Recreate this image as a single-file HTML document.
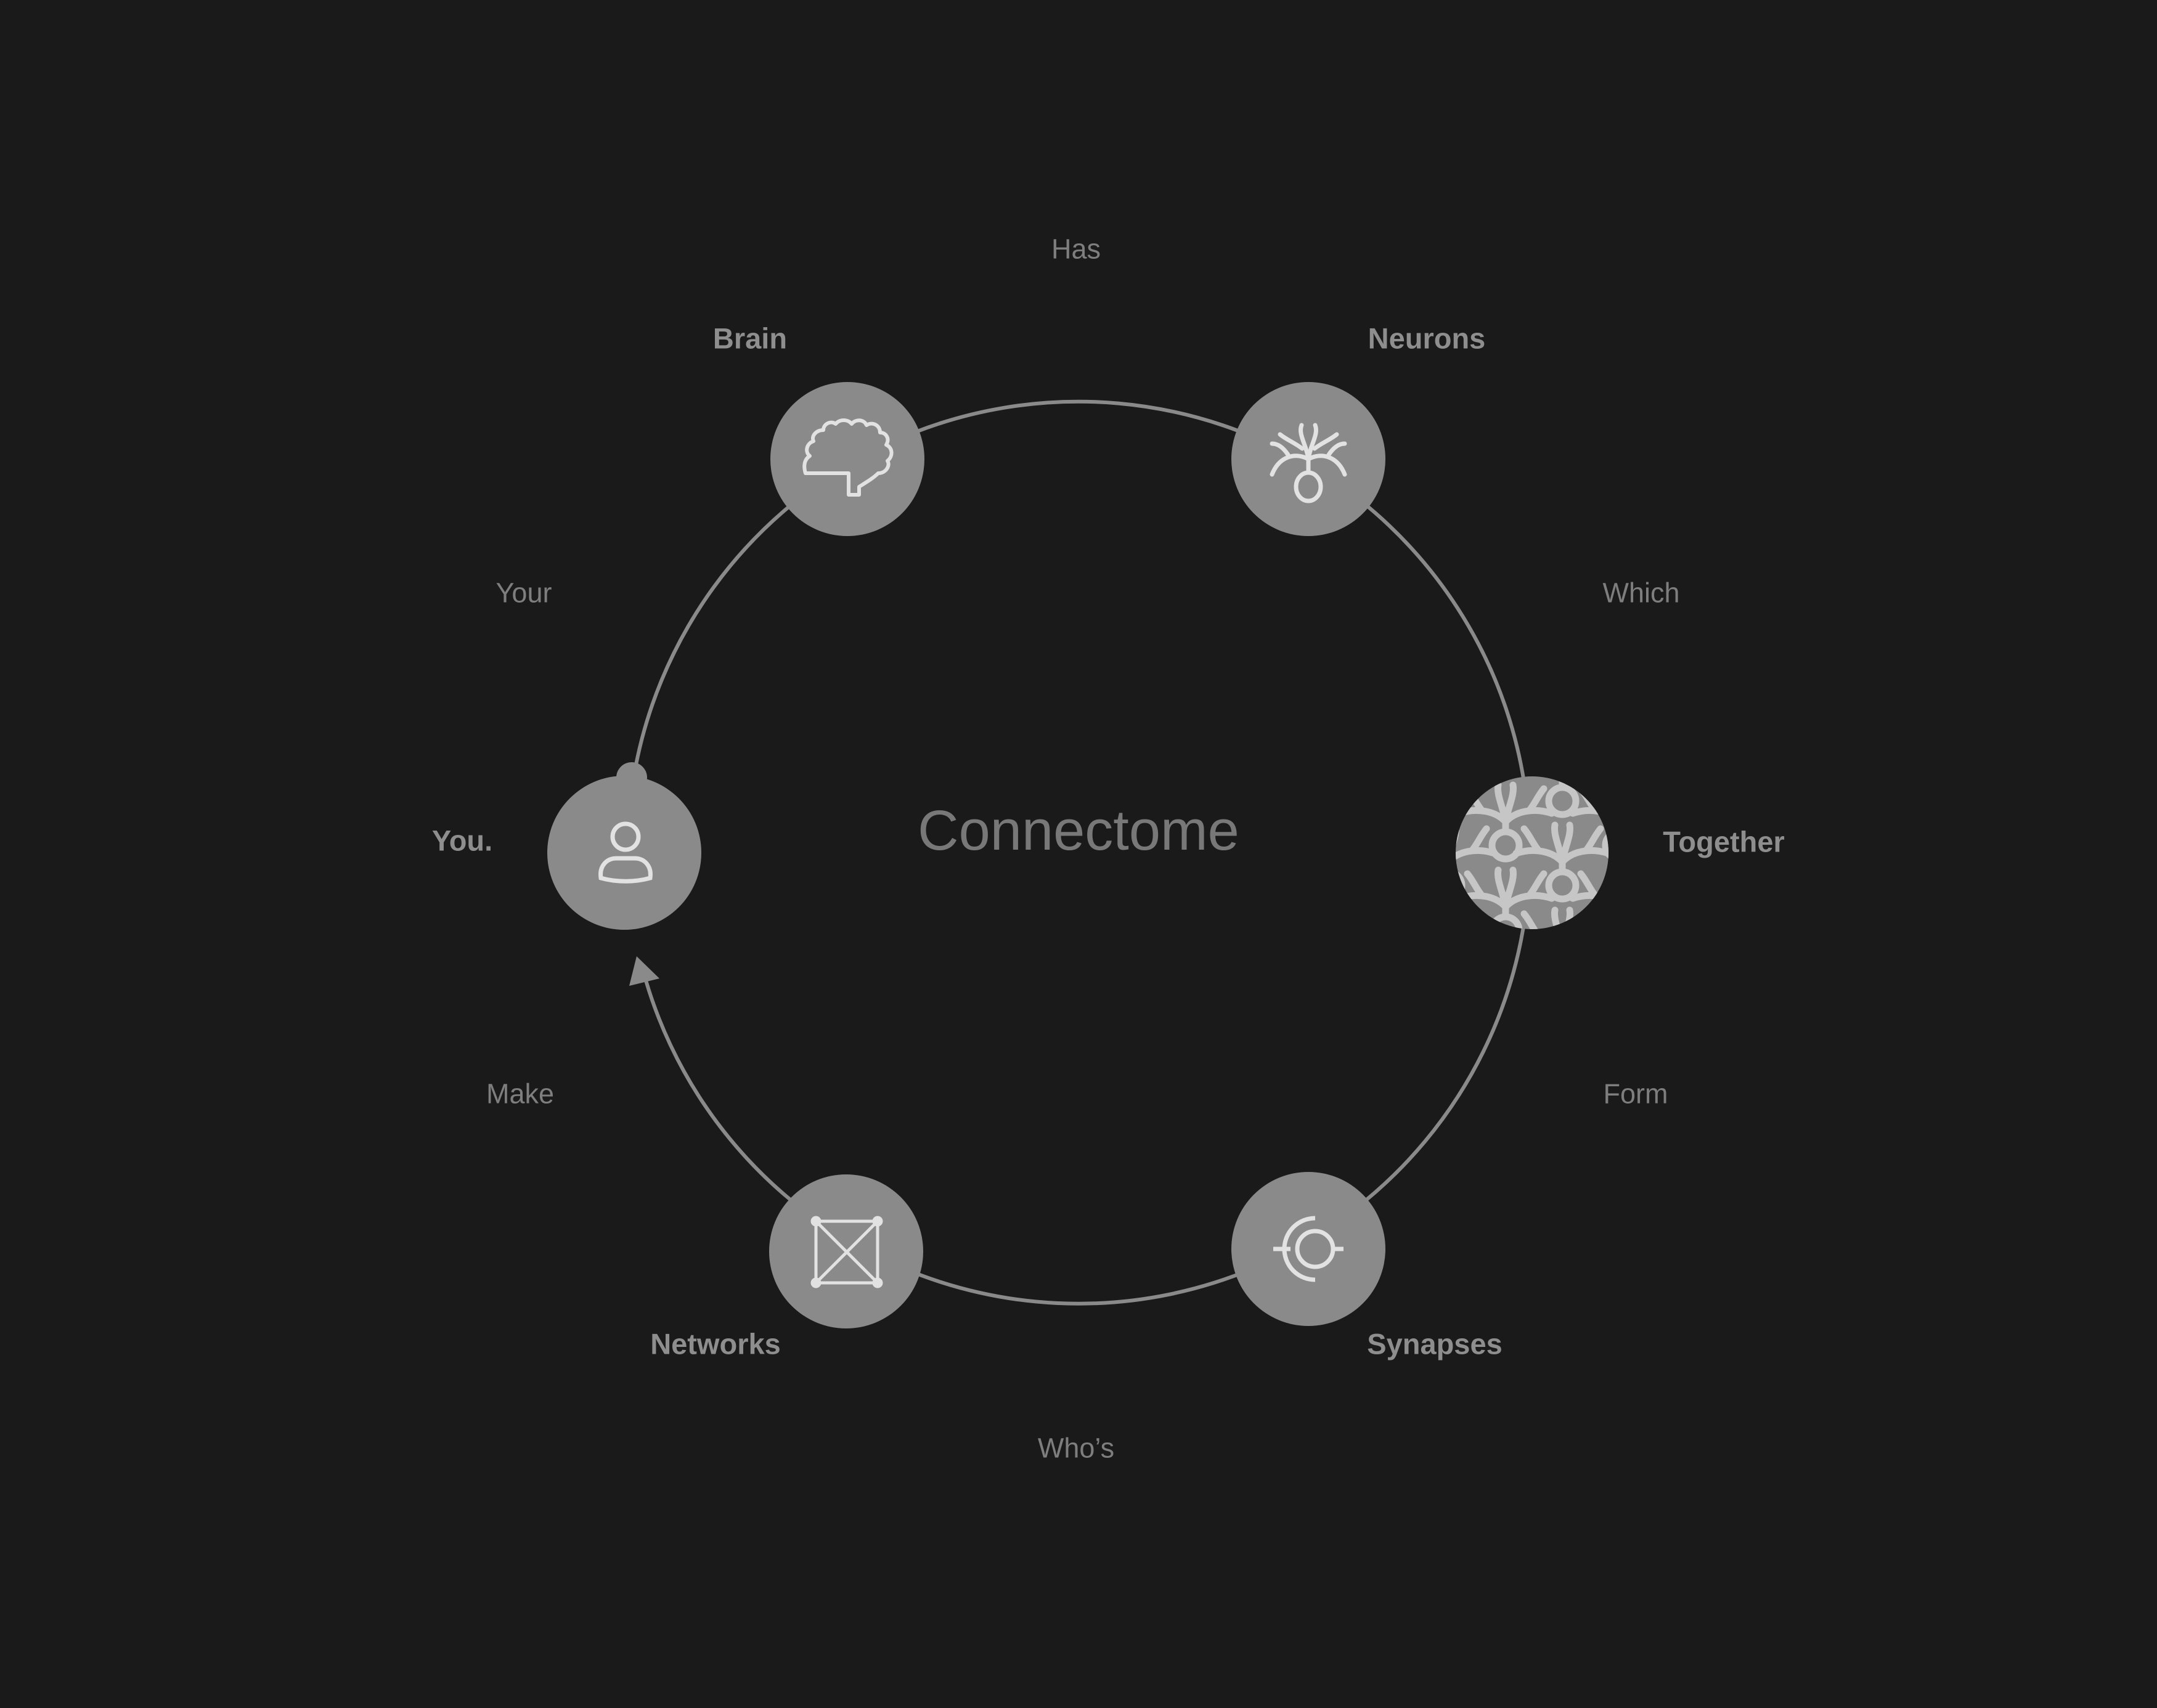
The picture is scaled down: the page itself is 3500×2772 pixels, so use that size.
<!DOCTYPE html>
<html><head><meta charset="utf-8"><style>
html,body{margin:0;padding:0;background:#1a1a1a;}
svg{display:block;}
text{font-family:"Liberation Sans",sans-serif;text-anchor:middle;dominant-baseline:central;}
.b{font-weight:bold;font-size:47px;fill:#8e8e8e;}
.l{font-size:45px;fill:#7e7e7e;}
</style></head><body>
<svg width="3500" height="2772" viewBox="0 0 3500 2772" xmlns="http://www.w3.org/2000/svg">
<defs>
<g id="nrn" fill="none" stroke="#c6c6c6" stroke-width="11" stroke-linecap="round">
<circle cx="0" cy="0" r="22"/>
<path d="M0,-22 V-38"/>
<path d="M0,-38 C-15,-55 -45,-62 -75,-52"/>
<path d="M0,-38 C-4,-62 -15,-82 -12,-98"/>
<path d="M-38,-56 C-48,-68 -52,-80 -62,-92"/>
<path d="M0,-38 C15,-55 45,-62 75,-52"/>
<path d="M0,-38 C4,-62 15,-82 12,-98"/>
<path d="M38,-56 C48,-68 52,-80 62,-92"/>
</g>
<clipPath id="tc"><circle cx="2486" cy="1384" r="124"/></clipPath>
</defs>
<rect width="3500" height="2772" fill="#1a1a1a"/>
<path d="M1048.5,1593 A732 732 0 1 0 1029,1257" fill="none" stroke="#8a8a8a" stroke-width="6"/>
<polygon points="1033,1552 1021,1600 1070,1588" fill="#8a8a8a"/>
<circle cx="1025" cy="1262" r="25" fill="#8a8a8a"/>
<g fill="#8a8a8a">
<circle cx="1375" cy="745" r="125"/>
<circle cx="2123" cy="745" r="125"/>
<circle cx="2486" cy="1384" r="124"/>
<circle cx="2123" cy="2027" r="125"/>
<circle cx="1373" cy="2031" r="125"/>
<circle cx="1013" cy="1384" r="125"/>
</g>
<!-- Brain -->
<path d="M1377,768 V803 H1394 V790 C1410,780 1418,775 1425,768 C1438,768 1445,755 1440,748 C1450,740 1448,726 1438,722 C1444,712 1438,702 1428,702 C1428,690 1416,684 1406,690 C1402,680 1388,680 1382,688 C1376,680 1362,680 1356,688 C1348,682 1336,688 1336,698 C1324,698 1316,708 1320,716 C1308,720 1306,734 1314,740 C1304,746 1304,758 1307,768 Z" fill="none" stroke="#e2e2e2" stroke-width="6" stroke-linejoin="round"/>
<!-- Neurons -->
<g fill="none" stroke="#e2e2e2" stroke-width="7" stroke-linecap="round">
<ellipse cx="2123" cy="790" rx="20" ry="23"/>
<path d="M2123,767 V745"/>
<path d="M2123,745 C2120,722 2106,705 2112,690"/>
<path d="M2113,728 C2100,718 2088,714 2077,705"/>
<path d="M2123,745 C2100,733 2075,742 2064,770"/>
<path d="M2090,738 C2082,726 2073,720 2064,720"/>
<path d="M2123,745 C2126,722 2140,705 2134,690"/>
<path d="M2133,728 C2146,718 2158,714 2169,705"/>
<path d="M2123,745 C2146,733 2171,742 2182,770"/>
<path d="M2156,738 C2164,726 2173,720 2182,720"/>
</g>
<!-- Together -->
<g clip-path="url(#tc)">
<use href="#nrn" x="2443" y="1372"/>
<use href="#nrn" x="2535" y="1437"/>
<use href="#nrn" x="2535" y="1300"/>
<use href="#nrn" x="2443" y="1510"/>
<use href="#nrn" x="2443" y="1235"/>
<use href="#nrn" x="2350" y="1300"/>
<use href="#nrn" x="2350" y="1437"/>
<use href="#nrn" x="2627" y="1372"/>
<use href="#nrn" x="2627" y="1510"/>
<use href="#nrn" x="2535" y="1575"/>
</g>
<!-- You -->
<g fill="none" stroke="#e2e2e2" stroke-width="7">
<circle cx="1015" cy="1358" r="21"/>
<path d="M975,1425 C972,1405 985,1393 1000,1393 H1030 C1045,1393 1058,1405 1055,1425 C1030,1432 1000,1432 975,1425 Z"/>
</g>
<!-- Networks -->
<g stroke="#e2e2e2" stroke-width="5" fill="#e2e2e2">
<path d="M1324,1982 H1424 V2082 H1324 Z M1324,1982 L1424,2082 M1424,1982 L1324,2082" fill="none"/>
<circle cx="1324" cy="1982" r="6"/><circle cx="1424" cy="1982" r="6"/>
<circle cx="1324" cy="2082" r="6"/><circle cx="1424" cy="2082" r="6"/>
</g>
<!-- Synapses -->
<g fill="none" stroke="#e2e2e2" stroke-width="7" stroke-linecap="butt">
<circle cx="2134" cy="2027" r="29"/>
<path d="M2134,1977 A50 50 0 0 0 2134,2077"/>
<path d="M2066,2027 H2094 M2161,2027 H2180"/>
</g>
<text x="1750" y="1348" style="font-size:92px;fill:#787878;font-weight:300">Connectome</text>
<text class="l" x="1746" y="404">Has</text>
<text class="b" x="1217" y="549">Brain</text>
<text class="b" x="2315" y="549">Neurons</text>
<text class="l" x="850" y="962">Your</text>
<text class="l" x="2663" y="962">Which</text>
<text class="b" x="750" y="1364">You.</text>
<text class="b" x="2797" y="1366">Together</text>
<text class="l" x="844" y="1775">Make</text>
<text class="l" x="2654" y="1775">Form</text>
<text class="b" x="1161" y="2181">Networks</text>
<text class="b" x="2328" y="2181">Synapses</text>
<text class="l" x="1746" y="2350">Who’s</text>
</svg>
</body></html>
